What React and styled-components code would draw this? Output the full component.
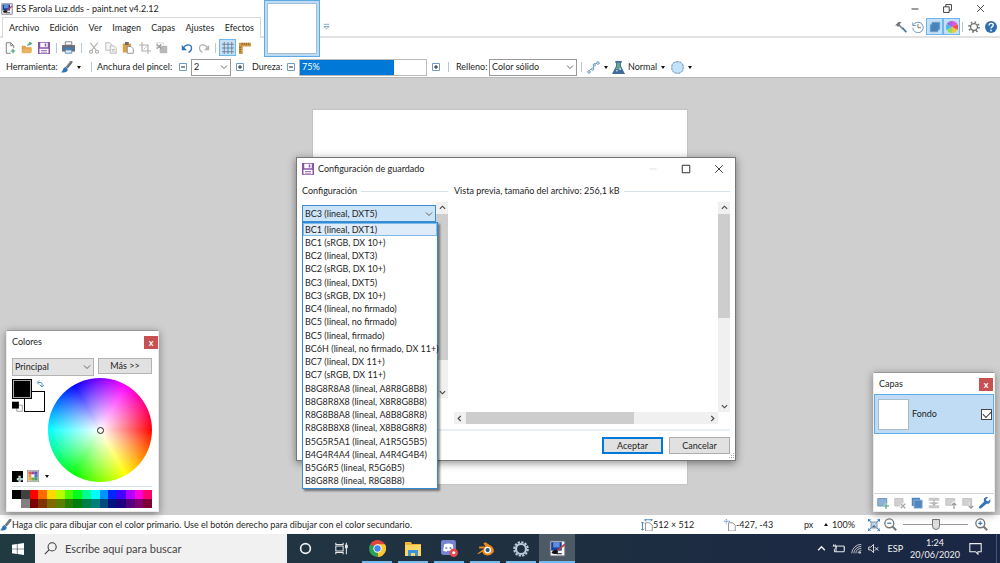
import React, { useState } from "react";
import styled, { createGlobalStyle } from "styled-components";

const menus = ["Archivo", "Edición", "Ver", "Imagen", "Capas", "Ajustes", "Efectos"];

const formats = [
  "BC1 (lineal, DXT1)",
  "BC1 (sRGB, DX 10+)",
  "BC2 (lineal, DXT3)",
  "BC2 (sRGB, DX 10+)",
  "BC3 (lineal, DXT5)",
  "BC3 (sRGB, DX 10+)",
  "BC4 (lineal, no firmado)",
  "BC5 (lineal, no firmado)",
  "BC5 (lineal, firmado)",
  "BC6H (lineal, no firmado, DX 11+)",
  "BC7 (lineal, DX 11+)",
  "BC7 (sRGB, DX 11+)",
  "B8G8R8A8 (lineal, A8R8G8B8)",
  "B8G8R8X8 (lineal, X8R8G8B8)",
  "R8G8B8A8 (lineal, A8B8G8R8)",
  "R8G8B8X8 (lineal, X8B8G8R8)",
  "B5G5R5A1 (lineal, A1R5G5B5)",
  "B4G4R4A4 (lineal, A4R4G4B4)",
  "B5G6R5 (lineal, R5G6B5)",
  "B8G8R8 (lineal, R8G8B8)",
];

const palette = [
  "#000000", "#404040", "#ff0000", "#ff6a00", "#ffd800", "#b6ff00", "#4cff00", "#00ff21",
  "#00ff90", "#00ffff", "#0094ff", "#0026ff", "#4800ff", "#b200ff", "#ff00dc", "#ff006e",
  "#ffffff", "#808080", "#7f0000", "#7f3300", "#7f6a00", "#5b7f00", "#267f00", "#007f0e",
  "#007f46", "#007f7f", "#004a7f", "#00137f", "#21007f", "#57007f", "#7f006e", "#7f0037",
];

const art = {
  app: (
    <>
      <path d="M1 1h14v14H1z" fill="#f4f6fa" stroke="#667" />
      <path d="M2 2h10v8H2z" fill="#1c3f94" />
      <path d="M4 2h6v5H4z" fill="#5f8ee0" />
      <path d="M15 4l-7 6" stroke="#b8434b" strokeWidth="1.6" />
      <path d="M3 12c1-2 4-3 5-1 0 2-3 2-5 1zM7 13h5" fill="#111" stroke="#111" />
    </>
  ),
  new: (
    <>
      <path d="M3 1h6l4 4v3M9 15H3V1M9 1v4h4" fill="none" stroke="#7b7f82" strokeWidth="1.3" />
      <path d="M12 9v6M9 12h6" stroke="#3f9b6d" strokeWidth="1.5" />
    </>
  ),
  open: (
    <>
      <path d="M1 14V5h5l1 2h7v7z" fill="#dda14c" />
      <path d="M3 9h12l-2 6H1z" fill="#e9b35f" />
      <path d="M9 5c0-3 2-3 4-3M11 0l3 2-3 2" fill="none" stroke="#48a37a" strokeWidth="1.4" />
    </>
  ),
  save: (
    <>
      <path d="M0 0h16v16H0z" fill="#8b55a8" />
      <path d="M3 1h10v6H3zM2 9h12v6H2z" fill="#fff" />
      <path d="M9 2h2v4H9zM4 11h8v1H4zM4 13h8v1H4z" fill="#8b55a8" />
    </>
  ),
  print: (
    <>
      <path d="M4 1h8v4H4z" fill="#fff" stroke="#6b6e72" />
      <path d="M0 5h16v8H0z" fill="#6a6e73" />
      <path d="M1 8h14v2H1z" fill="#3e7fbd" />
      <path d="M4 11h8v4H4z" fill="#dfeaf5" stroke="#4b7fae" />
    </>
  ),
  cut: (
    <g fill="none" stroke="#a9a9a9" strokeWidth="1.5">
      <path d="M3 1l8 10M13 1L5 11" />
      <circle cx="4" cy="13" r="2" />
      <circle cx="12" cy="13" r="2" />
    </g>
  ),
  copy: (
    <g fill="#f6f6f6" stroke="#b5b5b5" strokeWidth="1.2">
      <path d="M1 1h5l3 3v7H1z" />
      <path d="M7 5h5l3 3v7H7z" />
      <path d="M9 10h4M9 12h4" />
    </g>
  ),
  paste: (
    <>
      <path d="M1 2h11v12H1z" fill="#dba04d" />
      <path d="M4 0h5v4H4z" fill="#6d6d6d" />
      <path d="M7 6h5l3 3v6H7z" fill="#fff" stroke="#777" />
    </>
  ),
  crop: (
    <g fill="none" stroke="#b0b0b0" strokeWidth="1.5">
      <path d="M4 0v12h12M0 4h12v12" />
      <path d="M6 10l5-5" strokeWidth="1" />
    </g>
  ),
  deselect: (
    <>
      <path d="M5 5h10v10H5z" fill="#b8b8b8" />
      <path d="M1 1h9v2M1 1v7h2" fill="none" stroke="#bcbcbc" strokeDasharray="2 1" />
      <path d="M1 3l6 6M7 3L1 9" stroke="#999" strokeWidth="1.5" />
    </>
  ),
  undo: (
    <>
      <path d="M3 8c3-5 11-6 11 0 0 3-2 5-4 6" fill="none" stroke="#2f70b5" strokeWidth="1.8" />
      <path d="M1 4v7h7z" fill="#2f70b5" />
    </>
  ),
  redo: (
    <>
      <path d="M13 8C10 3 2 2 2 8c0 3 2 5 4 6" fill="none" stroke="#b0b0b0" strokeWidth="1.6" />
      <path d="M15 4v7H8z" fill="#b0b0b0" />
    </>
  ),
  grid: <path d="M3 0v16M8 0v16M13 0v16M0 3h16M0 8h16M0 13h16" stroke="#60788f" strokeWidth="1.1" />,
  ruler: (
    <>
      <path d="M0 1h16v5H5v10H0z" fill="#cf9a4a" />
      <path d="M4 1v3M7 1v3M10 1v3M13 1v3M0 7h3M0 10h3M0 13h3" stroke="#755322" />
    </>
  ),
  brush: (
    <>
      <path d="M15 0c1 1 0 3-1 4L9 10 6 8l5-6c1-2 3-3 4-2z" fill="#70767b" />
      <path d="M6 8l3 3c0 4-4 5-9 4 3-1 2-6 6-7z" fill="#2f74b8" />
    </>
  ),
  curve: (
    <g fill="#fff" stroke="#5b8ab4" strokeWidth="1.1">
      <path d="M3 13c0-5 5-1 5-5s0-5 5-5" fill="none" />
      <circle cx="2.500" cy="13.500" r="1.600" />
      <circle cx="7" cy="10" r="1.400" />
      <circle cx="9" cy="5" r="1.400" />
      <circle cx="13.500" cy="2.500" r="1.600" />
    </g>
  ),
  flask: (
    <>
      <path d="M4 0h8v2h-1v4l5 10H0L5 6V2H4z" fill="#41699a" />
      <path d="M6 2h4v5l2 3H4l2-3z" fill="#67a58a" />
      <circle cx="6" cy="12" r="1" fill="#e6f2ff" />
      <circle cx="10" cy="10" r="1" fill="#e6f2ff" />
    </>
  ),
  blob: (
    <>
      <rect x="1" y="1" width="14" height="14" rx="6" fill="#c3e2fb" stroke="#a5b9c9" strokeWidth="1.200" />
      <rect x="1" y="1" width="14" height="14" rx="6" fill="none" stroke="#6c98bd" strokeWidth="1.200" strokeDasharray="2 2" />
    </>
  ),
  hammer: (
    <>
      <path d="M0 6l5-5 4 1-3 2 1 1-3 3-2-2z" fill="#73787c" />
      <path d="M5 5l6 6" stroke="#73787c" strokeWidth="2" />
      <path d="M10 9l5 6" stroke="#3a78b5" strokeWidth="2.4" />
    </>
  ),
  history: (
    <g fill="none" stroke="#6b93bb" strokeWidth="1.3">
      <path d="M2 5a7 7 0 1 1-1 4" />
      <path d="M1 2v4h4" />
      <path d="M8 4v5h4" stroke="#777" />
    </g>
  ),
  layers: (
    <>
      <path d="M5 1h10v10l-4 4H1V5z" fill="#8bb4dc" />
      <path d="M4 2h10v9H4z" fill="#4c86bf" />
      <path d="M2 5h10v9H2z" fill="#4a82ba" />
    </>
  ),
  wheel: (
    <>
      <path d="M8 8V0a8 8 0 0 1 7 4z" fill="#e255d8" />
      <path d="M8 8l7-4a8 8 0 0 1 0 8z" fill="#f0524f" />
      <path d="M8 8l7 4a8 8 0 0 1-7 4z" fill="#f5c63a" />
      <path d="M8 8v8a8 8 0 0 1-7-4z" fill="#8fdd5a" />
      <path d="M8 8l-7 4a8 8 0 0 1 0-8z" fill="#4fb8e8" />
      <path d="M8 8L1 4a8 8 0 0 1 7-4z" fill="#a066dd" />
    </>
  ),
  gear: (
    <g fill="none" stroke="#6f7274">
      <circle cx="8" cy="8" r="4.6" strokeWidth="1.8" />
      <circle cx="8" cy="8" r="6.6" strokeWidth="2.4" strokeDasharray="2.1 3.08" />
    </g>
  ),
  help: (
    <>
      <circle cx="8" cy="8" r="8" fill="#2f6fb1" />
      <path d="M5.5 6c0-4 5.500-3.500 5.500-.5C11 7.500 8 7.500 8 10" fill="none" stroke="#fff" strokeWidth="1.8" />
      <path d="M7 11.500h2v2H7z" fill="#fff" />
    </>
  ),
  swap: (
    <g fill="none" stroke="#4a86c0" strokeWidth="1.8">
      <path d="M4 5h6c2 0 2 2 2 7" />
      <path d="M6 1L2 5l4 4M8 10l4 4 4-4" />
    </g>
  ),
  reset: (
    <>
      <path d="M7 6h8v9H7z" fill="#fff" stroke="#777" />
      <path d="M0 1h10v10H0z" fill="#000" />
    </>
  ),
  addColor: (
    <>
      <path d="M0 0h16v16H0z" fill="#000" />
      <path d="M11 7v9M7 12h9" stroke="#fff" strokeWidth="3" />
      <path d="M11 8v8M8 12h8" stroke="#5aa889" />
    </>
  ),
  swatches: (
    <>
      <path d="M0 0h16v16H0z" fill="#d9d9d9" stroke="#888" strokeWidth="1.500" />
      <path d="M2 2h4v4H2z" fill="#e05a3a" />
      <path d="M6 2h4v4H6z" fill="#a443a0" />
      <path d="M10 2h4v4h-4z" fill="#5b4fc0" />
      <path d="M2 6h4v4H2z" fill="#e8963a" />
      <path d="M6 6h4v4H6z" fill="#fff" />
      <path d="M10 6h4v4h-4z" fill="#3a78c8" />
      <path d="M2 10h4v4H2z" fill="#e6a838" />
      <path d="M6 10h4v4H6z" fill="#6cb04a" />
      <path d="M10 10h4v4h-4z" fill="#3fa06a" />
    </>
  ),
  layerAdd: (
    <>
      <path d="M1 2h12v10H1z" fill="#8db1d6" stroke="#5786b4" />
      <path d="M12 8v8M8 12h8" stroke="#fff" strokeWidth="3" />
      <path d="M12 8v8M8 12h8" stroke="#3f9b7d" strokeWidth="1.4" />
    </>
  ),
  layerDelete: (
    <>
      <path d="M1 2h11v10H1z" fill="#d0d0d0" stroke="#bbb" />
      <path d="M9 9l6 6M15 9l-6 6" stroke="#fff" strokeWidth="4" />
      <path d="M9 9l6 6M15 9l-6 6" stroke="#aaa" strokeWidth="1.8" />
    </>
  ),
  layerCopy: (
    <>
      <path d="M1 1h11v11H1z" fill="#5187bd" />
      <path d="M4 4h11v11H4z" fill="#5187bd" stroke="#9dc0e2" />
    </>
  ),
  layerMerge: (
    <>
      <path d="M1 1h14v4H1zM1 11h14v4H1z" fill="#c8c8c8" />
      <path d="M8 4v7M5 8l3 3 3-3M2 8h12" fill="none" stroke="#a5a5a5" strokeWidth="1.3" />
    </>
  ),
  layerUp: (
    <>
      <path d="M1 2h12v9H1z" fill="#d0d0d0" stroke="#bbb" />
      <path d="M12 16V8M9 11l3-3 3 3" fill="none" stroke="#fff" strokeWidth="4" />
      <path d="M12 16V8M9 11l3-3 3 3" fill="none" stroke="#999" strokeWidth="1.6" />
    </>
  ),
  layerDown: (
    <>
      <path d="M1 2h12v9H1z" fill="#d0d0d0" stroke="#bbb" />
      <path d="M12 7v8M9 12l3 3 3-3" fill="none" stroke="#fff" strokeWidth="4" />
      <path d="M12 7v8M9 12l3 3 3-3" fill="none" stroke="#999" strokeWidth="1.6" />
    </>
  ),
  wrench: (
    <path d="M15 3l-3 3-3-2 3-4c-4-1-7 3-5 6l-7 7c0 2 1 3 3 2l7-6c4 1 6-3 5-6z" fill="#3474b8" />
  ),
  size: (
    <>
      <path d="M6 5h5l4 3v8H6z" fill="#fff" stroke="#777" />
      <path d="M5 1h10M13 0l2 1-2 2M7 0L5 1l2 2M2 4v11M0 13l2 2 2-2M0 6l2-2 2 2" fill="none" stroke="#4986bf" strokeWidth="1.3" />
    </>
  ),
  pos: (
    <>
      <path d="M6 5h5l4 3v8H6z" fill="#fff" stroke="#777" />
      <path d="M3 0v7M0 3h9" stroke="#4986bf" strokeWidth="1.2" strokeDasharray="2 1" />
    </>
  ),
  fit: (
    <>
      <path d="M4 4h8v8H4z" fill="#b9d3ec" stroke="#6b7f92" />
      <path d="M5 11l3-3 3 3z" fill="#41699a" />
      <path d="M0 0l4 4M16 0l-4 4M0 16l4-4M16 16l-4-4M0 4V0h4M12 0h4v4M0 12v4h4M12 16h4v-4" fill="none" stroke="#3f7fbe" strokeWidth="1.4" />
    </>
  ),
  zoomOut: (
    <g fill="none" stroke="#777" strokeWidth="1.6">
      <circle cx="6.500" cy="6.500" r="5.500" />
      <path d="M10.500 10.500L15 15" strokeWidth="2.4" />
      <path d="M4 6.500h5" stroke="#3f7fbe" />
    </g>
  ),
  zoomIn: (
    <g fill="none" stroke="#777" strokeWidth="1.6">
      <circle cx="6.500" cy="6.500" r="5.500" />
      <path d="M10.500 10.500L15 15" strokeWidth="2.4" />
      <path d="M4 6.500h5M6.500 4v5" stroke="#3f7fbe" />
    </g>
  ),
  minus: (
    <>
      <path d="M1 1h14v14H1z" fill="#fff" stroke="#6f9cc6" strokeWidth="2" />
      <path d="M4 8h8" stroke="#222" strokeWidth="2" />
    </>
  ),
  plus: (
    <>
      <path d="M1 1h14v14H1z" fill="#fff" stroke="#6f9cc6" strokeWidth="2" />
      <path d="M4 8h8M8 4v8" stroke="#222" strokeWidth="2" />
    </>
  ),
  minimize: <path d="M1 8h14" stroke="currentColor" strokeWidth="1.8" />,
  maximize: <path d="M2 2h12v12H2z" fill="none" stroke="currentColor" strokeWidth="1.500" />,
  restore: <path d="M1 5h10v10H1zM5 5V1h10v10h-4" fill="none" stroke="currentColor" strokeWidth="1.500" />,
  close: <path d="M2 2l12 12M14 2L2 14" fill="none" stroke="currentColor" strokeWidth="1.400" />,
  up: <path d="M2 11l6-6 6 6" fill="none" stroke="currentColor" strokeWidth="2.600" />,
  down: <path d="M2 5l6 6 6-6" fill="none" stroke="currentColor" strokeWidth="2.600" />,
  left: <path d="M11 2L5 8l6 6" fill="none" stroke="currentColor" strokeWidth="2.600" />,
  right: <path d="M5 2l6 6-6 6" fill="none" stroke="currentColor" strokeWidth="2.600" />,
  more: <path d="M2 3h12M2 8l6 5 6-5z" fill="none" stroke="#6b93bb" strokeWidth="1.8" />,
  windows: (
    <path d="M0 2.300L6.500 1.400v6.200H0zM7.300 1.300L16 0v7.600H7.300zM0 8.400h6.500v6.200L0 13.700zM7.300 8.400H16V16l-8.700-1.300z" fill="#fff" />
  ),
  search: (
    <g fill="none" stroke="#3a3a3a" strokeWidth="1.3">
      <circle cx="10" cy="6" r="5" />
      <path d="M6.500 9.500L1 15" />
    </g>
  ),
  cortana: <circle cx="8" cy="8" r="6" fill="none" stroke="#f2f2f2" strokeWidth="2" />,
  taskview: (
    <g fill="none" stroke="#e8e8e8" strokeWidth="1.3">
      <path d="M1 1v2h9V1M1 15v-2h9v2M1 5h9v6H1zM14 1v14" />
      <path d="M13 4h2v3h-2z" fill="#e8e8e8" />
    </g>
  ),
  chrome: (
    <>
      <path d="M8 8L1.100 4A8 8 0 0 1 14.900 4z" fill="#e0463a" />
      <path d="M8 8h7V4a8 8 0 0 1-7 12z" fill="#fbc92f" />
      <path d="M8 8v8A8 8 0 0 1 1.100 4z" fill="#2fa154" />
      <path d="M8 4h7l1 4-4 1z" fill="#fbc92f" />
      <circle cx="8" cy="8" r="3.900" fill="#fff" />
      <circle cx="8" cy="8" r="3" fill="#4286f3" />
    </>
  ),
  folder: (
    <>
      <path d="M0 1h6l1 2h9v12H0z" fill="#f0b52e" />
      <path d="M0 4h16v11H0z" fill="#fbd667" />
      <path d="M3 9h10v6h-3v-3H6v3H3z" fill="#3d94dc" />
    </>
  ),
  discord: (
    <>
      <rect x="0" y="0" width="14" height="14" rx="2" fill="#7784cf" />
      <path d="M3 4c3-1 5-1 8 0l1 6-3 1-1-1H6l-1 1-3-1z" fill="#fff" />
      <circle cx="5" cy="7.500" r="1" fill="#7784cf" />
      <circle cx="9" cy="7.500" r="1" fill="#7784cf" />
      <circle cx="12" cy="12" r="4" fill="#e8474c" />
      <circle cx="12" cy="12" r="1.500" fill="#fff" />
    </>
  ),
  blender: (
    <>
      <path d="M0 13l7-5H2V6h6L6 3l2-1 6 4c2 2 3 5 0 7-2 2-6 2-8 0l-1-2-3 2z" fill="#ef8a1d" />
      <circle cx="10" cy="9.500" r="3.200" fill="#fff" />
      <circle cx="10" cy="9.500" r="2" fill="#265787" />
    </>
  ),
  cog: (
    <g fill="none" stroke="#b9ccd8">
      <circle cx="8" cy="8" r="5" strokeWidth="2.200" />
      <circle cx="8" cy="8" r="6.800" strokeWidth="2" strokeDasharray="2.300 1.260" />
    </g>
  ),
  battery: (
    <path d="M5 5h10v7H5zM15 7h1v3M2 3v2M4 3v2M1 5h4v2L3 9v3h2" fill="none" stroke="#eee" strokeWidth="1.200" />
  ),
  wifi: (
    <g fill="none" stroke="#ddd" strokeWidth="1.200">
      <path d="M1 15A14 14 0 0 1 15 2M4 15A11 11 0 0 1 15 5M7 15a8 8 0 0 1 8-7M10 15a5 5 0 0 1 5-4" />
      <circle cx="13" cy="14" r="1" fill="#eee" />
    </g>
  ),
  volume: <path d="M1 6h3l4-4v12l-4-4H1zM10 6l5 5M15 6l-5 5" fill="none" stroke="#eee" strokeWidth="1.300" />,
  notice: <path d="M1 2h14v10h-4v3l-3-3H1z" fill="none" stroke="#eee" strokeWidth="1.300" />,
};

const Icon = ({ name, size = 12 }) => (
  <Svg width={size} height={size} viewBox="0 0 16 16" aria-hidden="true">
    {art[name]}
  </Svg>
);

const Combo = ({ id, label, options, chevron = 8, ...rest }) => (
  <ComboBox {...rest}>
    <select id={id} aria-label={label}>
      {options.map((option) => (
        <option key={option}>{option}</option>
      ))}
    </select>
    <Icon name="down" size={chevron} />
  </ComboBox>
);

const Scrollbar = ({ horizontal, thumb }) => (
  <Track $horizontal={horizontal}>
    <Icon name={horizontal ? "left" : "up"} size={7} />
    <Rail $horizontal={horizontal}>
      <Thumb $horizontal={horizontal} $size={thumb} />
    </Rail>
    <Icon name={horizontal ? "right" : "down"} size={7} />
  </Track>
);

const Tool = ({ icon, label, active, size }) => (
  <ToolButton type="button" aria-label={label} $active={active}>
    <Icon name={icon} size={size} />
  </ToolButton>
);

const SaveDialog = () => {
  const [format, setFormat] = useState("BC3 (lineal, DXT5)");

  return (
    <Dialog role="dialog" aria-labelledby="dialog-title">
      <DialogTitle>
        <Icon name="save" />
        <h2 id="dialog-title">Configuración de guardado</h2>
        <WindowButton type="button" aria-label="Minimizar" disabled>
          <Icon name="minimize" size={8} />
        </WindowButton>
        <WindowButton type="button" aria-label="Maximizar">
          <Icon name="maximize" size={10} />
        </WindowButton>
        <WindowButton type="button" aria-label="Cerrar">
          <Icon name="close" size={10} />
        </WindowButton>
      </DialogTitle>
      <DialogBody>
        <Group>
          <Legend>Configuración</Legend>
          <Settings>
            <FormatField>
              <Combo id="format" label="Configuración" options={[format]} $focused />
              <OptionList role="listbox" aria-label="Formato">
                {formats.map((name, i) => (
                  <Option
                    key={name}
                    role="option"
                    aria-selected={name === format}
                    $hover={i === 0}
                    onClick={() => setFormat(name)}
                  >
                    {name}
                  </Option>
                ))}
              </OptionList>
            </FormatField>
            <Scrollbar thumb={85} />
          </Settings>
        </Group>
        <Group>
          <Legend>Vista previa, tamaño del archivo: 256,1 kB</Legend>
          <Preview>
            <Scrollbar thumb={56} />
            <Scrollbar horizontal thumb={70} />
          </Preview>
        </Group>
      </DialogBody>
      <DialogFooter>
        <PushButton type="button" $primary>Aceptar</PushButton>
        <PushButton type="button">Cancelar</PushButton>
      </DialogFooter>
      <Grip width="7" height="7" viewBox="0 0 7 7" aria-hidden="true">
        <path d="M5 0h1v1H5zM5 2h1v1H5zM3 2h1v1H3zM5 4h1v1H5zM3 4h1v1H3zM1 4h1v1H1z" fill="#aaa" />
      </Grip>
    </Dialog>
  );
};

const ColorsPanel = () => (
  <Colors>
    <PanelTitle>
      <h2>Colores</h2>
      <CloseButton type="button" aria-label="Cerrar colores">x</CloseButton>
    </PanelTitle>
    <ColorTop>
      <Combo label="Color activo" options={["Principal"]} $width={82} $height={18} $grey />
      <MoreButton type="button">Más &gt;&gt;</MoreButton>
    </ColorTop>
    <ColorMain>
      <ColorSide>
        <Swatches>
          <Secondary />
          <Primary />
          <SwapButton type="button" aria-label="Intercambiar colores">
            <Icon name="swap" size={8} />
          </SwapButton>
          <ResetButton type="button" aria-label="Restablecer colores">
            <Icon name="reset" size={11} />
          </ResetButton>
        </Swatches>
        <ColorActions>
          <Icon name="addColor" size={11} />
          <Icon name="swatches" size={12} />
          <Caret />
        </ColorActions>
      </ColorSide>
      <Wheel>
        <WheelMark />
      </Wheel>
    </ColorMain>
    <Palette>
      {palette.map((color) => (
        <Chip key={color} $color={color} />
      ))}
    </Palette>
  </Colors>
);

const LayersPanel = () => {
  const [visible, setVisible] = useState(true);

  return (
    <Layers>
      <PanelTitle>
        <h2>Capas</h2>
        <CloseButton type="button" aria-label="Cerrar capas">x</CloseButton>
      </PanelTitle>
      <Layer>
        <LayerThumb />
        <span>Fondo</span>
        <input
          type="checkbox"
          checked={visible}
          onChange={(e) => setVisible(e.target.checked)}
        />
      </Layer>
      <LayerTools>
        <Tool icon="layerAdd" label="Agregar capa" />
        <Tool icon="layerDelete" label="Eliminar capa" />
        <Tool icon="layerCopy" label="Duplicar capa" />
        <Tool icon="layerMerge" label="Combinar capa" />
        <Tool icon="layerUp" label="Subir capa" />
        <Tool icon="layerDown" label="Bajar capa" />
        <Tool icon="wrench" label="Propiedades" />
      </LayerTools>
    </Layers>
  );
};

const App = () => {
  const [hardness, setHardness] = useState(75);
  const [zoom, setZoom] = useState(50);

  return (
    <Page>
      <GlobalStyle />
      <Header>
        <TitleBar>
          <Icon name="app" />
          <h1>ES Farola Luz.dds - paint.net v4.2.12</h1>
          <WindowButton type="button" aria-label="Minimizar">
            <Icon name="minimize" size={8} />
          </WindowButton>
          <WindowButton type="button" aria-label="Restaurar">
            <Icon name="restore" size={9} />
          </WindowButton>
          <WindowButton type="button" aria-label="Cerrar">
            <Icon name="close" size={9} />
          </WindowButton>
        </TitleBar>
        <MenuRow>
          <MenuBar>
            {menus.map((menu) => (
              <button type="button" key={menu}>{menu}</button>
            ))}
          </MenuBar>
          <ImageList type="button" aria-label="Lista de imágenes">
            <Icon name="more" size={7} />
          </ImageList>
          <Utilities>
            <Tool icon="hammer" label="Herramientas" />
            <Tool icon="history" label="Historial" />
            <Tool icon="layers" label="Capas" active />
            <Tool icon="wheel" label="Colores" active />
            <Separator $width={5} />
            <Tool icon="gear" label="Configuración" />
            <Tool icon="help" label="Ayuda" />
          </Utilities>
        </MenuRow>
        <ToolRow>
          <Tool icon="new" label="Nuevo" />
          <Tool icon="open" label="Abrir" />
          <Tool icon="save" label="Guardar" />
          <Separator />
          <Tool icon="print" label="Imprimir" size={13} />
          <Separator />
          <Tool icon="cut" label="Cortar" />
          <Tool icon="copy" label="Copiar" />
          <Tool icon="paste" label="Pegar" />
          <Tool icon="crop" label="Recortar" />
          <Tool icon="deselect" label="Anular selección" />
          <Separator $hidden />
          <Tool icon="undo" label="Deshacer" />
          <Tool icon="redo" label="Rehacer" />
          <Separator $width={7} />
          <Tool icon="grid" label="Cuadrícula" active />
          <Tool icon="ruler" label="Reglas" />
        </ToolRow>
        <OptionRow>
          <Label $width={52}>Herramienta:</Label>
          <Tool icon="brush" label="Pincel" />
          <Caret />
          <Separator $width={12} />
          <Label $width={77} htmlFor="brush-width">Anchura del pincel:</Label>
          <Tool icon="minus" label="Reducir anchura" size={8} />
          <Combo id="brush-width" options={["2"]} $width={40} />
          <Tool icon="plus" label="Aumentar anchura" size={8} />
          <Label $width={30} $gap htmlFor="hardness">Dureza:</Label>
          <Tool icon="minus" label="Reducir dureza" size={8} />
          <Hardness $value={hardness}>
            <input
              id="hardness"
              type="range"
              value={hardness}
              onChange={(e) => setHardness(e.target.value)}
            />
            <output htmlFor="hardness">{hardness}%</output>
          </Hardness>
          <Tool icon="plus" label="Aumentar dureza" size={8} />
          <Separator />
          <Label $width={33} $gap htmlFor="fill">Relleno:</Label>
          <Combo id="fill" options={["Color sólido"]} $width={88} />
          <Separator />
          <Tool icon="curve" label="Suavizado" size={13} />
          <Caret />
          <BlendButton type="button">
            <Icon name="flask" size={13} />
            <span>Normal</span>
            <Caret />
          </BlendButton>
          <Tool icon="blob" label="Recorte de selección" size={13} />
          <Caret />
        </OptionRow>
        <DocumentTab type="button" aria-label="ES Farola Luz.dds" />
      </Header>

      <Workspace>
        <Canvas />
        <SaveDialog />
        <ColorsPanel />
        <LayersPanel />
      </Workspace>

      <StatusBar>
        <Icon name="brush" />
        <Hint>
          Haga clic para dibujar con el color primario. Use el botón derecho para dibujar con el color secundario.
        </Hint>
        <Readout $width={83}>
          <Icon name="size" />
          512 × 512
        </Readout>
        <Readout $width={80}>
          <Icon name="pos" />
          -427, -43
        </Readout>
        <Unit $width={28}>
          px
          <Caret $up />
        </Unit>
        <Unit $width={33}>100%</Unit>
        <Tool icon="fit" label="Ajustar a la ventana" />
        <Tool icon="zoomOut" label="Alejar" size={13} />
        <Zoom
          type="range"
          aria-label="Zoom"
          value={zoom}
          onChange={(e) => setZoom(e.target.value)}
        />
        <Tool icon="zoomIn" label="Acercar" size={13} />
      </StatusBar>

      <Taskbar>
        <StartButton type="button" aria-label="Inicio">
          <Icon name="windows" size={12} />
        </StartButton>
        <SearchBox>
          <Icon name="search" size={13} />
          <input type="search" aria-label="Buscar" placeholder="Escribe aquí para buscar" />
        </SearchBox>
        <Task type="button" aria-label="Cortana"><Icon name="cortana" size={13} /></Task>
        <Task type="button" aria-label="Vista de tareas"><Icon name="taskview" size={13} /></Task>
        <Task type="button" aria-label="Chrome" $open><Icon name="chrome" size={17} /></Task>
        <Task type="button" aria-label="Explorador" $open><Icon name="folder" size={16} /></Task>
        <Task type="button" aria-label="Discord" $open><Icon name="discord" size={17} /></Task>
        <Task type="button" aria-label="Blender" $open><Icon name="blender" size={17} /></Task>
        <Task type="button" aria-label="Ajustes" $open><Icon name="cog" size={16} /></Task>
        <Task type="button" aria-label="paint.net" $open $current><Icon name="app" size={17} /></Task>
        <Tray>
          <Icon name="up" size={9} />
          <Icon name="battery" size={13} />
          <Icon name="wifi" size={11} />
          <Icon name="volume" size={11} />
          <Language>ESP</Language>
          <Clock>
            <time>1:24</time>
            <time>20/06/2020</time>
          </Clock>
          <Icon name="notice" size={13} />
        </Tray>
        <ShowDesktop type="button" aria-label="Mostrar escritorio" />
      </Taskbar>
    </Page>
  );
};

export default App;

const GlobalStyle = createGlobalStyle`
  * {
    box-sizing: border-box;
  }
  body {
    margin: 0;
    background: #cfcfcf;
    color: #1e1e1e;
    font: 9px/12px Lato, "Open Sans", sans-serif;
  }
  button, input, select {
    font: inherit;
    color: inherit;
  }
  button {
    padding: 0;
    border: 0;
    background: none;
  }
  h1, h2 {
    margin: 0;
    font: inherit;
    white-space: nowrap;
  }
`;

const Svg = styled.svg`
  display: block;
  flex: none;
`;

const Page = styled.div`
  display: flex;
  flex-direction: column;
  min-height: 100vh;
`;

const Header = styled.header`
  position: relative;
  background: #fff;
  border-bottom: 1px solid #b8b8b8;
`;

const TitleBar = styled.div`
  display: flex;
  align-items: center;
  height: 17px;
  padding: 0 3px 0 1px;

  h1 {
    flex: 1;
    margin-left: 3px;
  }
`;

const WindowButton = styled.button`
  display: grid;
  place-items: center;
  width: 33px;
  height: 16px;
  color: #222;

  &:disabled {
    color: #ddd;
  }
`;

const MenuRow = styled.div`
  display: flex;
  align-items: center;
  height: 21px;
  padding-left: 2px;
  border-bottom: 2px solid #e2e2e2;
`;

const MenuBar = styled.nav`
  display: flex;
  justify-content: space-between;
  align-items: center;
  width: 259px;
  height: 21px;
  padding: 0 6px;
  border: 1px solid #d8d8d8;
  border-bottom: 0;
  background: #fff;
  margin-bottom: -2px;
`;

const ImageList = styled.button`
  margin-left: 62px;
`;

const Utilities = styled.div`
  display: flex;
  align-items: center;
  margin-left: auto;
  padding-right: 1px;
`;

const ToolButton = styled.button`
  display: grid;
  place-items: center;
  flex: none;
  width: 17px;
  height: 17px;
  border: 1px solid ${(p) => (p.$active ? "#6db6ee" : "transparent")};
  background: ${(p) => (p.$active ? "#c4e0f6" : "none")};
`;

const Separator = styled.i`
  display: flex;
  justify-content: center;
  flex: none;
  width: ${(p) => p.$width || 8}px;
  visibility: ${(p) => (p.$hidden ? "hidden" : "visible")};

  &::before {
    content: "";
    width: 1px;
    height: 10px;
    background: #b5c8d8;
  }
`;

const ToolRow = styled.div`
  display: flex;
  align-items: center;
  height: 19px;
  padding-left: 1px;
`;

const OptionRow = styled.div`
  display: flex;
  align-items: center;
  height: 20px;
  padding-left: 6px;
`;

const Label = styled.label`
  flex: none;
  width: ${(p) => p.$width}px;
  margin-left: ${(p) => (p.$gap ? 4 : 0)}px;
  white-space: nowrap;
`;

const Caret = styled.i`
  flex: none;
  margin: 0 4px 0 2px;
  border: 2px solid transparent;
  border-top: ${(p) => (p.$up ? 0 : "3px solid #111")};
  border-bottom: ${(p) => (p.$up ? "3px solid #111" : 0)};
`;

const ComboBox = styled.div`
  display: grid;
  align-items: center;
  flex: none;
  width: ${(p) => (p.$width ? `${p.$width}px` : "100%")};
  height: ${(p) => p.$height || 17}px;
  color: #555;

  select {
    grid-area: 1 / 1;
    width: 100%;
    height: 100%;
    padding: 0 2px;
    appearance: none;
    border: 1px solid ${(p) => (p.$focused ? "#3c8ccf" : p.$grey ? "#b4b4b4" : "#999")};
    border-radius: 0;
    background: ${(p) => (p.$focused ? "#cce4f7" : p.$grey ? "#e3e3e3" : "#fff")};
    color: #1e1e1e;
  }

  svg {
    grid-area: 1 / 1;
    justify-self: end;
    margin-right: 3px;
    pointer-events: none;
  }

  path {
    stroke-width: 1.8;
  }
`;

const Hardness = styled.div`
  display: grid;
  align-items: center;
  flex: none;
  width: 128px;
  height: 17px;
  border: 1px solid #bbb;

  input {
    grid-area: 1 / 1;
    width: 100%;
    height: 100%;
    margin: 0;
    appearance: none;
    background: linear-gradient(to right, #0078d7 ${(p) => p.$value}%, #fff 0);
  }

  input::-webkit-slider-thumb {
    appearance: none;
    width: 1px;
  }

  output {
    grid-area: 1 / 1;
    padding-left: 2px;
    color: #fff;
    pointer-events: none;
  }
`;

const BlendButton = styled.button`
  display: flex;
  align-items: center;
  gap: 3px;
  width: 57px;

  i {
    margin-left: auto;
  }
`;

const DocumentTab = styled.button`
  position: absolute;
  left: 264px;
  top: 0;
  width: 56px;
  height: 57px;
  border: 1px solid #5fa9e3;
  background: #fff;
  box-shadow: inset 0 0 0 2px #bcdcf5, inset 0 0 0 3px #a3bfd6;
`;

const Workspace = styled.main`
  position: relative;
  display: grid;
  place-items: center;
  flex: 1;
  background: #cfcfcf;
`;

const Canvas = styled.div`
  width: 376px;
  aspect-ratio: 1;
  background: #fff;
  border: 1px solid #c4c4c4;
`;

const Dialog = styled.section`
  position: absolute;
  left: 296px;
  top: 79px;
  width: 440px;
  padding: 0 5px;
  border: 1px solid #777;
  background: #fff;
  box-shadow: 0 2px 8px rgba(0, 0, 0, 0.45);
`;

const DialogTitle = styled.div`
  display: flex;
  align-items: center;
  height: 22px;

  h2 {
    flex: 1;
    margin-left: 4px;
  }

  & > button:last-child {
    margin-right: -5px;
  }
`;

const DialogBody = styled.div`
  display: grid;
  grid-template-columns: 146px 1fr;
  gap: 6px;
  padding-top: 5px;
`;

const Group = styled.div`
  display: flex;
  flex-direction: column;
  min-width: 0;
`;

const Legend = styled.div`
  display: flex;
  align-items: center;
  gap: 4px;
  margin-bottom: 5px;
  white-space: nowrap;

  &::after {
    content: "";
    flex: 1;
    height: 1px;
    background: #d5e2ec;
  }
`;

const Settings = styled.div`
  display: grid;
  grid-template-columns: 1fr 12px;
  height: 196px;
`;

const FormatField = styled.div`
  position: relative;
  padding-top: 3px;
`;

const OptionList = styled.ul`
  position: absolute;
  z-index: 2;
  left: 0;
  top: 20px;
  display: grid;
  grid-template-columns: 100%;
  grid-auto-rows: 1fr;
  width: 136px;
  height: 267px;
  margin: 0;
  padding: 0;
  list-style: none;
  border: 1px solid #2f8ad8;
  background: #fff;
  box-shadow: 2px 2px 2px rgba(0, 0, 0, 0.45);
`;

const Option = styled.li`
  display: flex;
  align-items: center;
  padding-left: 2px;
  white-space: nowrap;
  background: ${(p) => (p.$hover ? "#deebf8" : "none")};
  outline: ${(p) => (p.$hover ? "1px solid #7fb9e8" : "none")};
  outline-offset: -1px;
`;

const Track = styled.div`
  display: flex;
  flex-direction: ${(p) => (p.$horizontal ? "row" : "column")};
  align-items: center;
  justify-content: space-between;
  padding: ${(p) => (p.$horizontal ? "0 2px" : "2px 0")};
  background: #f0f0f0;
  color: #444;
`;

const Rail = styled.div`
  flex: 1;
  width: ${(p) => (p.$horizontal ? "auto" : "100%")};
  height: ${(p) => (p.$horizontal ? "100%" : "auto")};
  margin: ${(p) => (p.$horizontal ? "0 3px" : "3px 0")};
`;

const Thumb = styled.div`
  width: ${(p) => (p.$horizontal ? `${p.$size}%` : "100%")};
  height: ${(p) => (p.$horizontal ? "100%" : `${p.$size}%`)};
  background: #cdcdcd;
`;

const Preview = styled.div`
  display: grid;
  grid-template-columns: 1fr 12px;
  grid-template-rows: 210px 12px;

  & > :first-child {
    grid-column: 2;
  }
`;

const DialogFooter = styled.div`
  display: flex;
  justify-content: flex-end;
  gap: 6px;
  margin-top: 5px;
  padding: 6px 0;
  border-top: 2px solid #e9f0f5;
`;

const PushButton = styled.button`
  width: 61px;
  height: 17px;
  border: ${(p) => (p.$primary ? "2px solid #0078d7" : "1px solid #adadad")};
  background: #e1e1e1;
  line-height: 12px;
`;

const Grip = styled.svg`
  position: absolute;
  right: 0;
  bottom: 0;
`;

const Panel = styled.section`
  position: absolute;
  bottom: 3px;
  background: #fff;
  border: 1px solid #ececec;
  border-top-color: #999;
  box-shadow: 0 2px 8px rgba(0, 0, 0, 0.4);
`;

const Colors = styled(Panel)`
  left: 6px;
  width: 153px;
  padding: 0 6px 3px 5px;
`;

const Layers = styled(Panel)`
  right: 5px;
  width: 122px;

  & > :first-child {
    padding: 0 1px 0 5px;
  }
`;

const PanelTitle = styled.div`
  display: flex;
  align-items: center;
  justify-content: space-between;
  height: 21px;
`;

const CloseButton = styled.button`
  width: 14px;
  height: 13px;
  margin: 2px 0 0;
  background: #c75050;
  color: #fff;
  font-weight: 700;
  line-height: 10px;

  ${Colors} & {
    margin-right: -6px;
  }
`;

const ColorTop = styled.div`
  display: flex;
  justify-content: space-between;
  margin-top: 6px;
`;

const MoreButton = styled.button`
  width: 54px;
  height: 16px;
  border: 1px solid #b4b4b4;
  background: #e1e1e1;
`;

const ColorMain = styled.div`
  display: flex;
  justify-content: space-between;
  margin-top: 2px;
  padding-bottom: 4px;
  border-bottom: 1px solid #d5e2ec;
`;

const ColorSide = styled.div`
  display: flex;
  flex-direction: column;
  justify-content: space-between;
  width: 36px;
`;

const Swatches = styled.div`
  position: relative;
  width: 33px;
  height: 33px;
  margin-top: 1px;
`;

const Primary = styled.div`
  position: absolute;
  left: 0;
  top: 0;
  width: 20px;
  height: 20px;
  border: 1px solid #000;
  outline: 1px solid #aaa;
  outline-offset: -2px;
  background: #000;
`;

const Secondary = styled.div`
  position: absolute;
  right: 0;
  bottom: 0;
  width: 21px;
  height: 21px;
  border: 1px solid #000;
  background: #fff;
`;

const SwapButton = styled.button`
  position: absolute;
  right: 1px;
  top: 1px;
`;

const ResetButton = styled.button`
  position: absolute;
  left: 0;
  bottom: 0;
`;

const ColorActions = styled.div`
  display: flex;
  align-items: center;
  gap: 4px;
`;

const Wheel = styled.div`
  display: grid;
  place-items: center;
  width: 104px;
  height: 104px;
  border-radius: 50%;
  background: radial-gradient(closest-side, #fff, transparent),
    conic-gradient(from 90deg, red, yellow, lime, cyan, blue, magenta, red);
`;

const WheelMark = styled.i`
  width: 7px;
  height: 7px;
  border: 1px solid #222;
  border-radius: 50%;
`;

const Palette = styled.div`
  display: grid;
  grid-template-columns: repeat(16, 1fr);
  grid-auto-rows: 1fr;
  height: 18px;
  margin-top: 3px;
`;

const Chip = styled.i`
  background: ${(p) => p.$color};
`;

const Layer = styled.label`
  display: flex;
  align-items: center;
  gap: 3px;
  height: 40px;
  padding: 0 1px 0 3px;
  border: 1px solid #5caeee;
  background: #bfdcf4;

  input {
    display: grid;
    place-items: center;
    width: 11px;
    height: 11px;
    margin: 0 0 0 auto;
    appearance: none;
    border: 1px solid #444;
    background: #fff;
  }

  input:checked::before {
    content: "";
    width: 7px;
    height: 4px;
    border: solid #333;
    border-width: 0 0 1px 1px;
    transform: translateY(-1px) rotate(-45deg);
  }
`;

const LayerThumb = styled.div`
  width: 31px;
  height: 31px;
  border: 1px solid #a8bccc;
  background: #fff;
`;

const LayerTools = styled.div`
  display: flex;
  margin-top: 59px;
  border-top: 1px solid #d4d4d4;
`;

const StatusBar = styled.footer`
  display: flex;
  align-items: center;
  height: 19px;
  padding-right: 10px;
  background: #fff;
`;

const Hint = styled.span`
  flex: 1;
  white-space: nowrap;
`;

const Readout = styled.span`
  display: flex;
  align-items: center;
  width: ${(p) => p.$width}px;
`;

const Unit = styled.span`
  display: flex;
  align-items: center;
  justify-content: space-between;
  width: ${(p) => p.$width}px;
`;

const Zoom = styled.input`
  width: 65px;
  height: 12px;
  margin: 0 5px 0 4px;
  appearance: none;
  background: linear-gradient(#999, #999) center / 100% 1px no-repeat;

  &::-webkit-slider-thumb {
    appearance: none;
    width: 8px;
    height: 11px;
    border: 1px solid #777;
    border-radius: 0 0 4px 4px;
    background: #ddd;
  }
`;

const Taskbar = styled.footer`
  display: flex;
  height: 29px;
  background: linear-gradient(to right, #213a42, #1f3040 50%, #1a2645);
  color: #f2f2f2;
`;

const StartButton = styled.button`
  display: grid;
  place-items: center;
  width: 35px;
`;

const SearchBox = styled.label`
  display: flex;
  align-items: center;
  gap: 8px;
  width: 252px;
  padding-left: 9px;
  background: #f1f1f1;
  color: #333;

  input {
    flex: 1;
    min-width: 0;
    padding: 0;
    border: 0;
    background: none;
    font-size: 11px;
  }

  input::placeholder {
    color: #444;
  }
`;

const Task = styled.button`
  display: grid;
  place-items: center;
  width: 36px;
  background-color: ${(p) => (p.$current ? "#4b5a65" : "transparent")};
  background-image: ${(p) => (p.$open ? "linear-gradient(#76b9ed, #76b9ed)" : "none")};
  background-position: bottom;
  background-size: ${(p) => (p.$current ? "100%" : "30px")} 2px;
  background-repeat: no-repeat;
`;

const Tray = styled.div`
  display: flex;
  align-items: center;
  gap: 6px;
  margin-left: auto;
`;

const Language = styled.span`
  margin-left: 3px;
`;

const Clock = styled.span`
  display: flex;
  flex-direction: column;
  align-items: center;
  margin: 0 3px 0 1px;
`;

const ShowDesktop = styled.button`
  width: 4px;
  margin-left: 14px;
  border-left: 1px solid #4a5670;
`;
